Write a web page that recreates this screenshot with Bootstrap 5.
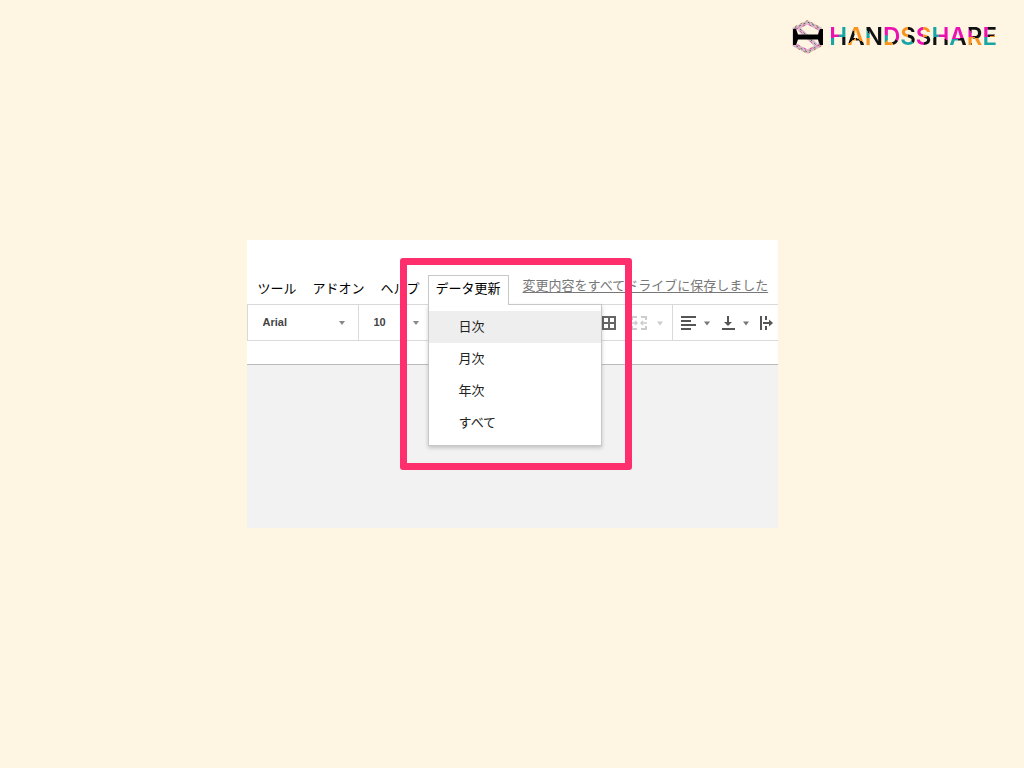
<!DOCTYPE html>
<html lang="ja">
<head>
<meta charset="utf-8">
<meta name="viewport" content="width=device-width, initial-scale=1">
<title>データ更新メニュー</title>
<link href="https://cdn.jsdelivr.net/npm/bootstrap@5.3.0/dist/css/bootstrap.min.css" rel="stylesheet">
<style>
  body { background: #fef5e2; font-family: "Liberation Sans", "Noto Sans CJK JP", sans-serif; font-size: 13px; line-height: 20px; color: #111; }
  .side { flex: 1 1 0; }
  .brand-link { margin: 18px 27px 0; gap: 2px; }
  .brand-name { font-family: Inter, sans-serif; font-weight: 600; font-size: 24px; line-height: 36px; padding-top: 1px; }
  .brand-name span { color: transparent; -webkit-background-clip: text; background-clip: text; }
  /* each letter is cut into coloured wedges, clockwise from the top */
  .k-h1 { background-image: conic-gradient(at 55% 52%, #19a5a5 0 90deg, #111 90deg 180deg, #19a5a5 180deg 265deg, #ec12b0 265deg); }
  .k-a1 { background-image: conic-gradient(at 50% 55%, #f7931e 0 120deg, #111 120deg 180deg, #f7931e 180deg 235deg, #111 235deg 340deg, #f7931e 340deg); }
  .k-n { background-image: conic-gradient(at 40% 52%, #111 0 180deg, #f7931e 180deg 260deg, #19a5a5 260deg 320deg, #111 320deg); }
  .k-d { background-image: conic-gradient(at 50% 52%, #ec12b0 0 120deg, #111 120deg 170deg, #f7931e 170deg 230deg, #19a5a5 230deg 290deg, #ec12b0 290deg); }
  .k-s1 { background-image: conic-gradient(at 50% 52%, #111 0 140deg, #19a5a5 140deg 265deg, #f7931e 265deg); }
  .k-s2 { background-image: conic-gradient(at 50% 52%, #f7931e 0 80deg, #111 80deg 180deg, #ec12b0 180deg); }
  .k-h2 { background-image: conic-gradient(at 45% 52%, #ec12b0 0 110deg, #111 110deg 265deg, #19a5a5 265deg); }
  .k-a2 { background-image: conic-gradient(at 50% 58%, #ec12b0 0 80deg, #111 80deg 180deg, #19a5a5 180deg 265deg, #ec12b0 265deg); }
  .k-r { background-image: conic-gradient(at 45% 52%, #111 0 110deg, #f7931e 110deg 150deg, #111 150deg 200deg, #f7931e 200deg 270deg, #ec12b0 270deg 330deg, #111 330deg); }
  .k-e { background-image: conic-gradient(at 40% 52%, #111 0 75deg, #f7931e 75deg 110deg, #19a5a5 110deg 265deg, #ec12b0 265deg); }
  .sheet-shot { width: 100%; max-width: 531px; background: #fff; }
  .menu-bar { height: 64px; padding: 35px 0 0 3px; }
  .menu-bar button { border: 1px solid transparent; border-bottom: 0; background: none; padding: 0 7px 4px; height: 30px; line-height: 20px; color: #000; white-space: nowrap; }
  .menu-bar .open-tab { background: #fff; border-color: #c8c8c8; position: relative; z-index: 1001; }
  .saved { color: #777; margin: 1px 0 0 14px; white-space: nowrap; text-underline-offset: 2px; }
  .saved:hover { color: #444; }
  .drop-list { --bs-dropdown-min-width: 174px; --bs-dropdown-padding-y: 6px; --bs-dropdown-border-color: #c8c8c8; --bs-dropdown-border-radius: 0; --bs-dropdown-font-size: 13px; --bs-dropdown-item-padding-x: 30px; --bs-dropdown-item-padding-y: 6px; --bs-dropdown-link-color: #222; --bs-dropdown-link-active-bg: #eee; --bs-dropdown-link-active-color: #222; box-shadow: 0 2px 4px rgba(0,0,0,.2); top: calc(100% - 1px); }
  .tools { height: 37px; border: 1px solid #d9d9d9; border-right: 0; overflow: hidden; }
  .tools select { appearance: none; border: 0; border-right: 1px solid #d9d9d9; background: url("data:image/svg+xml,%3Csvg xmlns='http://www.w3.org/2000/svg' width='6' height='4'%3E%3Cpath d='M0 0h6L3 4z' fill='%23888'/%3E%3C/svg%3E") no-repeat right 13px center; font-size: 11px; font-weight: 700; color: #444; padding: 0 15px 2px; height: 35px; border-radius: 0; }
  .font-pick { width: 111px; }
  .size-pick { width: 74px; }
  .tools button { border: 0; background: none; padding: 0; display: flex; align-items: center; }
  .split { width: 1px; height: 35px; background: #d9d9d9; }
  .formula { height: 24px; border-bottom: 1px solid #bbb; }
  .cells { height: 163px; background: #f2f2f2; }
  .callout { position: absolute; left: 153px; top: 18px; width: 232px; height: 212px; border: 7px solid #ff2f6d; border-radius: 3px; z-index: 1010; pointer-events: none; }
</style>
</head>
<body>
<div class="d-flex flex-column min-vh-100">
  <header class="side d-flex justify-content-end align-items-start">
    <a href="#" class="brand-link d-flex text-decoration-none" aria-label="HANDSSHARE">
      <svg width="36" height="38" viewBox="0 0 36 38" aria-hidden="true">
        <g fill="none">
          <path d="M3.500 11 16.500 4.500 29 11v16L16.500 33.500 3.500 27zM8 11 25 27" stroke="#d9b9c8" stroke-width="4"/>
          <path d="M3.500 10.500 16.500 4 29 10.500v16L16.500 34 3.500 27M9 11 25 27" stroke="#3f6d66" stroke-width="1" stroke-dasharray="2 3"/>
          <path d="M5 11 16.500 6 28 12M28 27 16.500 32 5 26M9 13 22 26" stroke="#e44fae" stroke-width="1" stroke-dasharray="3 4"/>
          <path d="M4 8.500 16.500 2.500 30 10M30 28 16.500 35.500 4 29" stroke="#b9763a" stroke-width="1" stroke-dasharray="2 4"/>
        </g>
        <path d="M2 11h3l2 5.500h20l2-5.500h3v16h-3l-2-5.500H7L5 27H2z" fill="#000"/>
      </svg>
      <span class="brand-name"><span class="k-h1">H</span><span class="k-a1">A</span><span class="k-n">N</span><span class="k-d">D</span><span class="k-s1">S</span><span class="k-s2">S</span><span class="k-h2">H</span><span class="k-a2">A</span><span class="k-r">R</span><span class="k-e">E</span></span>
    </a>
  </header>

  <main class="sheet-shot position-relative mx-auto">
    <nav class="menu-bar d-flex align-items-start" aria-label="メニュー">
      <button type="button">ツール</button>
      <button type="button">アドオン</button>
      <button type="button">ヘルプ</button>
      <div class="dropdown">
        <button type="button" class="open-tab" data-bs-toggle="dropdown" aria-expanded="true">データ更新</button>
        <ul class="dropdown-menu drop-list show">
          <li><a class="dropdown-item active" href="#">日次</a></li>
          <li><a class="dropdown-item" href="#">月次</a></li>
          <li><a class="dropdown-item" href="#">年次</a></li>
          <li><a class="dropdown-item" href="#">すべて</a></li>
        </ul>
      </div>
      <a href="#" class="saved">変更内容をすべてドライブに保存しました</a>
    </nav>

    <div class="tools d-flex align-items-center">
      <select class="font-pick flex-shrink-0" aria-label="フォント"><option>Arial</option></select>
      <select class="size-pick flex-shrink-0" aria-label="サイズ"><option>10</option></select>
      <div class="ms-auto d-flex align-items-center flex-shrink-0">
        <button type="button" aria-label="枠線"><svg width="30" height="18" viewBox="0 0 30 18"><path d="M2 3h12v12H2zM8 3v12M2 9h12" fill="none" stroke="#666" stroke-width="2"/></svg></button>
        <button type="button" disabled aria-label="セルを結合"><svg width="41" height="18" viewBox="0 0 41 18"><path d="M1 6V3h5M10 3h5v3M1 12v3h5M10 15h5v-3" fill="none" stroke="#ccc" stroke-width="2"/><path d="M0 9h5M11 9h5M4 7l2 2-2 2M12 7l-2 2 2 2" fill="none" stroke="#ccc" stroke-width="1.500"/><path d="M26 7.500h6l-3 4z" fill="#ccc"/></svg></button>
        <div class="split"></div>
        <button type="button" aria-label="横方向の配置"><svg width="46" height="18" viewBox="0 0 46 18"><path d="M8 3h15M8 7h10M8 11h15M8 15h10" stroke="#555" stroke-width="2"/><path d="M31 7.500h6l-3 4z" fill="#777"/></svg></button>
        <button type="button" aria-label="縦方向の配置"><svg width="39" height="18" viewBox="0 0 39 18"><path d="M3 15h13M9 2v8" stroke="#555" stroke-width="2"/><path d="M5 8h8l-4 4z" fill="#555"/><path d="M24 7.500h6l-3 4z" fill="#777"/></svg></button>
        <button type="button" aria-label="折り返し"><svg width="20" height="18" viewBox="0 0 20 18"><path d="M3 2v14M8 2v4M8 12v4M5 9h8" stroke="#555" stroke-width="2"/><path d="M11 5.500v7l4-3.500z" fill="#555"/></svg></button>
      </div>
    </div>
    <div class="formula"></div>
    <div class="cells"></div>
    <div class="callout"></div>
  </main>
  <div class="side"></div>
</div>
<script src="https://cdn.jsdelivr.net/npm/bootstrap@5.3.0/dist/js/bootstrap.bundle.min.js"></script>
</body>
</html>
